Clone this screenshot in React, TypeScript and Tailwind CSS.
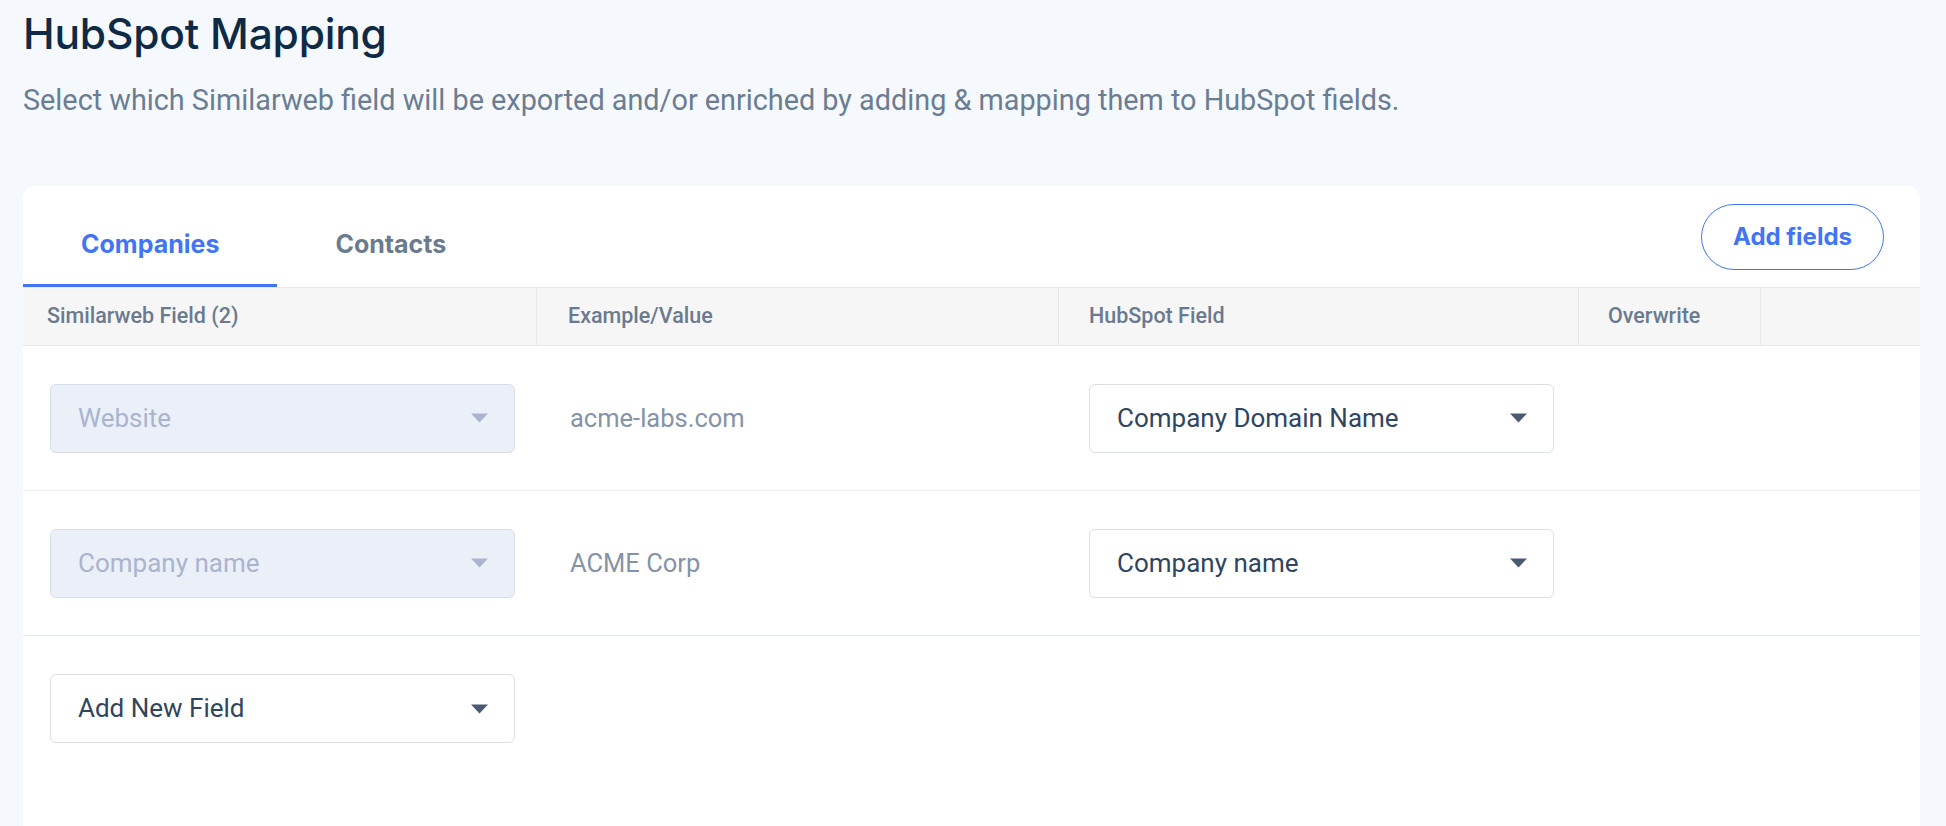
import { useState } from "react";

type Row = {
  source: string;
  example: string;
  target: string;
};

const rows: Row[] = [
  { source: "Website", example: "acme-labs.com", target: "Company Domain Name" },
  { source: "Company name", example: "ACME Corp", target: "Company name" },
];

function Caret({ muted }: { muted?: boolean }) {
  return (
    <svg width="19" height="10" viewBox="0 0 19 10" className="shrink-0">
      <path d="M1 0.5h17L9.5 9.5z" fill={muted ? "#aab4cd" : "#4b5a70"} />
    </svg>
  );
}

function Select({ value, disabled }: { value: string; disabled?: boolean }) {
  return (
    <div
      className={
        disabled
          ? "flex h-[69px] w-[465px] items-center justify-between rounded-[6px] border border-[#d8dee9] bg-[#ebf0f8] pl-[27px] pr-[25px] text-[26px] text-[#aab4cf]"
          : "flex h-[69px] w-[465px] items-center justify-between rounded-[6px] border border-[#dcdfe5] bg-white pl-[27px] pr-[25px] text-[26px] text-[#2f4560]"
      }
    >
      <span>{value}</span>
      <Caret muted={disabled} />
    </div>
  );
}

export default function App() {
  const [tab, setTab] = useState("Companies");

  return (
    <main className="flex h-screen flex-col overflow-hidden bg-[#f5f8fc] pl-[23px] pr-[26px] pt-[7px] font-['Roboto',sans-serif]">
      <h1 className="font-['Inter',sans-serif] text-[42.5px] leading-[54px] font-medium tracking-[-0.2px] text-[#0f2a45]">
        HubSpot Mapping
      </h1>
      <p className="mt-[20px] text-[28.8px] leading-[38px] text-[#6b7d93]">
        Select which Similarweb field will be exported and/or enriched by adding &amp; mapping them to HubSpot fields.
      </p>

      <section className="mt-[67px] flex-1 rounded-t-[12px] bg-white">
        <div className="flex items-start justify-between">
          <div className="flex">
            {["Companies", "Contacts"].map((name) => (
              <button
                key={name}
                onClick={() => setTab(name)}
                className={
                  tab === name
                    ? "border-b-[3px] border-[#4175f5] px-[58px] pt-[44px] pb-[26px] font-['Inter',sans-serif] text-[25px] leading-[28px] font-bold text-[#4175f5]"
                    : "border-b-[3px] border-transparent px-[58px] pt-[44px] pb-[26px] font-['Inter',sans-serif] text-[25px] leading-[28px] font-bold text-[#6b7a8e]"
                }
              >
                {name}
              </button>
            ))}
          </div>
          <button className="mt-[18px] mr-[36px] h-[66px] w-[183px] rounded-full border border-[#4175f5] font-['Inter',sans-serif] text-[24px] font-bold text-[#4175f5]">
            Add fields
          </button>
        </div>

        <div className="grid h-[59px] grid-cols-[513px_522px_520px_182px_1fr] border-y border-[#e6e8ec] bg-[#f6f6f6] text-[21.5px] font-medium text-[#6b7a8e]">
          <div className="flex items-center pl-[24px]">Similarweb Field (2)</div>
          <div className="flex items-center border-l border-[#e6e8ec] pl-[31px]">Example/Value</div>
          <div className="flex items-center border-l border-[#e6e8ec] pl-[30px]">HubSpot Field</div>
          <div className="flex items-center border-l border-[#e6e8ec] pl-[29px]">Overwrite</div>
          <div className="border-l border-[#e6e8ec]" />
        </div>

        {rows.map((row) => (
          <div
            key={row.source}
            className="grid h-[145px] grid-cols-[513px_522px_520px_182px_1fr] items-center border-b border-[#e8ebef]"
          >
            <div className="pl-[27px]">
              <Select value={row.source} disabled />
            </div>
            <div className="pl-[34px] text-[25.5px] text-[#8693a6]">{row.example}</div>
            <div className="pl-[31px]">
              <Select value={row.target} />
            </div>
            <div />
            <div />
          </div>
        ))}

        <div className="pt-[38px] pl-[27px]">
          <Select value="Add New Field" />
        </div>
      </section>
    </main>
  );
}
